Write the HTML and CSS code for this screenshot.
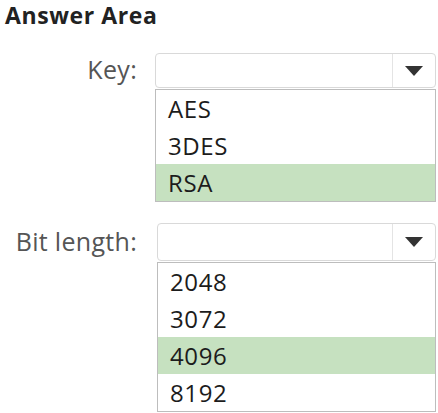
FILE: index.html
```html
<!DOCTYPE html>
<html lang="en">
<head>
    <meta charset="UTF-8">
    <title>Answer Area</title>
    <link rel="stylesheet" href="styles.css">
</head>
<body>

    <div class="answer">
        <h2>Answer Area</h2>

        <div class="field field-key">
            <label>Key:</label>
            <div class="drop">
                <div class="select"><span class="arrow"></span></div>
                <ul class="options">
                    <li>AES</li>
                    <li>3DES</li>
                    <li class="picked">RSA</li>
                </ul>
            </div>
        </div>

        <div class="field field-bits">
            <label>Bit length:</label>
            <div class="drop">
                <div class="select"><span class="arrow"></span></div>
                <ul class="options">
                    <li>2048</li>
                    <li>3072</li>
                    <li class="picked">4096</li>
                    <li>8192</li>
                </ul>
            </div>
        </div>
    </div>

</body>
</html>
```

FILE: styles.css
```css
body {
    margin: 0;
    background: #fff;
    font-family: "Open Sans", "Noto Sans", sans-serif;
    color: #1c1c1c;
}

.answer {
    padding: 0 2px 0 5px;
}

h2 {
    margin: 0;
    font-size: 23px;
    line-height: 31px;
    font-weight: 700;
    letter-spacing: 0.6px;
    color: #222;
}

.field {
    display: grid;
    grid-template-columns: 132px 1fr;
    column-gap: 18px;
}

.field-key {
    margin-top: 22px;
}

.field-bits {
    margin-top: 21px;
    column-gap: 20px;
}

label {
    text-align: right;
    font-size: 25px;
    color: #555;
    letter-spacing: 0.3px;
}

.field-key label {
    line-height: 32px;
}

.field-bits label {
    line-height: 36px;
}

.select {
    display: flex;
    justify-content: flex-end;
    height: 33px;
    border: 1px solid #d9d9d9;
    border-radius: 4px;
}

.field-bits .select {
    height: 36px;
}

.arrow {
    width: 42px;
    border-left: 1px solid #e4e4e4;
    display: flex;
    align-items: center;
    justify-content: center;
}

.arrow::after {
    content: "";
    border-left: 9px solid transparent;
    border-right: 9px solid transparent;
    border-top: 10px solid #333;
}

.options {
    list-style: none;
    margin: 1px 0 0;
    padding: 0;
    border: 1px solid #bdbdbd;
}

.options li {
    font-size: 24px;
    line-height: 37px;
    padding-left: 12px;
    letter-spacing: 0.6px;
}

.options li.picked {
    background: #c6e1c0;
}
```
